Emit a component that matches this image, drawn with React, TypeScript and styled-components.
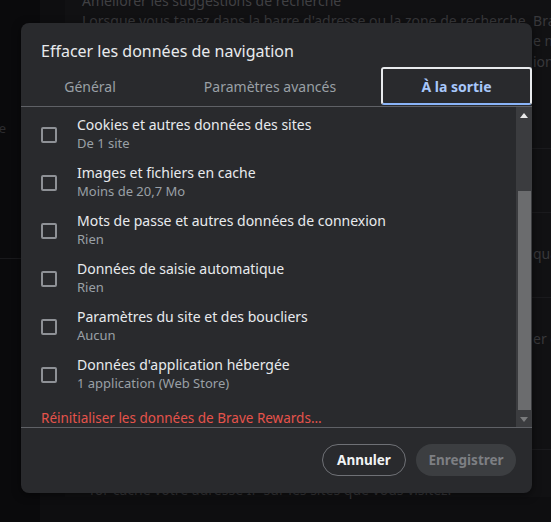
import React from "react";
import styled, { createGlobalStyle } from "styled-components";

const Global = createGlobalStyle`
  html, body { margin: 0; padding: 0; background: #0d0d0f; overflow: hidden; }
  body { width: 551px; height: 522px; font-family: "Noto Sans", "DejaVu Sans", sans-serif; }
  * { box-sizing: border-box; }
`;

const Page = styled.div`
  position: relative;
  width: 551px;
  height: 522px;
  display: flex;
  overflow: hidden;
  background: #0e0e10;
`;

const Sidebar = styled.div`
  width: 40px;
  flex: none;
  background: #0a0a0c;
  padding-top: 119px;
  overflow: hidden;
`;

const SideText = styled.div`
  width: 6px;
  overflow: hidden;
  direction: rtl;
  white-space: nowrap;
  color: #2c2c2f;
  font-size: 13px;
  line-height: 18px;
`;

const SideLine = styled.div`
  height: 1px;
  background: #19191c;
  margin-top: 121px;
`;

const Main = styled.div`
  flex: 1;
  padding-left: 25px;
  overflow: hidden;
`;

const Card = styled.div`
  background: #111113;
  height: 505px;
  width: 600px;
  padding: 0 0 0 17px;
  margin-top: -8px;
  color: #38383b;
  font-size: 14px;
  white-space: nowrap;
`;

const BgTitle = styled.div`
  color: #404043;
  line-height: 18px;
`;

const BgPara = styled.div`
  line-height: 20px;
  margin-top: 1px;
`;

const BgLine = styled.div<{ $gap: number }>`
  height: 1px;
  background: #1a1a1d;
  margin-top: ${(p) => p.$gap}px;
`;

const BgRow = styled.div<{ $gap: number }>`
  padding-left: 451px;
  margin-top: ${(p) => p.$gap}px;
  line-height: 20px;
`;

const BgBottom = styled.div`
  padding-left: 6px;
  margin-top: 31px;
  line-height: 18px;
`;

const Dialog = styled.div`
  position: absolute;
  left: 21px;
  top: 23px;
  width: 511px;
  height: 470px;
  background: #292a2d;
  border-radius: 8px;
  box-shadow: 0 2px 8px rgba(0, 0, 0, 0.5);
  display: flex;
  flex-direction: column;
  overflow: hidden;
`;

const Title = styled.h2`
  margin: 0;
  padding: 17px 20px 0;
  font-size: 16px;
  font-weight: 400;
  color: #e8eaed;
  line-height: 22px;
`;

const Tabs = styled.div`
  display: grid;
  grid-template-columns: 138px 222px 1fr;
  margin-top: 5px;
  height: 40px;
  border-bottom: 1px solid #5f6166;
`;

const Tab = styled.div<{ $active?: boolean }>`
  display: flex;
  align-items: center;
  justify-content: center;
  height: 38px;
  font-size: 14px;
  color: ${(p) => (p.$active ? "#a8c7fa" : "#9aa0a6")};
  font-weight: ${(p) => (p.$active ? 700 : 400)};
  border: ${(p) => (p.$active ? "2px solid #e8eaed" : "none")};
  border-bottom: ${(p) => (p.$active ? "2px solid #8ab4f8" : "none")};
  border-radius: ${(p) => (p.$active ? "3px" : "0")};
`;

const Body = styled.div`
  display: flex;
  height: 321px;
  border-bottom: 1px solid #5f6166;
`;

const List = styled.div`
  flex: 1;
  padding: 3px 0 0 20px;
`;

const Item = styled.div`
  display: flex;
  align-items: center;
  height: 48px;
`;

const Box = styled.span`
  width: 16px;
  height: 16px;
  border: 2px solid #8e9196;
  border-radius: 2px;
  flex: none;
  margin-right: 20px;
  margin-top: 1px;
`;

const Texts = styled.div`
  display: flex;
  flex-direction: column;
`;

const ItemTitle = styled.div`
  font-size: 14px;
  color: #e8eaed;
  line-height: 19px;
`;

const ItemSub = styled.div`
  font-size: 13px;
  color: #9aa0a6;
  line-height: 19px;
`;

const Link = styled.div`
  margin-top: 11px;
  font-size: 13.5px;
  color: #e5534b;
  line-height: 18px;
`;

const Scrollbar = styled.div`
  width: 16px;
  flex: none;
  background: #3b3c3f;
  display: flex;
  flex-direction: column;
  align-items: center;
`;

const Arrow = styled.div`
  height: 16px;
  width: 16px;
  display: flex;
  align-items: center;
  justify-content: center;
  flex: none;
`;

const Gap = styled.div<{ $h: number }>`
  height: ${(p) => p.$h}px;
  flex: none;
`;

const Thumb = styled.div`
  width: 13px;
  flex: 1;
  background: #6b6c6e;
`;

const Footer = styled.div`
  display: flex;
  justify-content: flex-end;
  gap: 10px;
  padding: 16px 16px 0;
`;

const Button = styled.button<{ $primary?: boolean }>`
  height: 32px;
  border-radius: 16px;
  font-family: inherit;
  font-size: 13.5px;
  font-weight: 700;
  padding: 0;
  width: ${(p) => (p.$primary ? "100px" : "84px")};
  color: ${(p) => (p.$primary ? "#7d7f83" : "#f1f3f4")};
  background: ${(p) => (p.$primary ? "#3c3e41" : "transparent")};
  border: ${(p) => (p.$primary ? "none" : "1px solid #6f7176")};
`;

const items = [
  ["Cookies et autres données des sites", "De 1 site"],
  ["Images et fichiers en cache", "Moins de 20,7 Mo"],
  ["Mots de passe et autres données de connexion", "Rien"],
  ["Données de saisie automatique", "Rien"],
  ["Paramètres du site et des boucliers", "Aucun"],
  ["Données d'application hébergée", "1 application (Web Store)"],
];

export default function App() {
  return (
    <>
      <Global />
      <Page>
        <Sidebar>
          <SideText>Confidentialité et sécurité e</SideText>
          <SideLine />
        </Sidebar>
        <Main>
          <Card>
            <BgTitle>Améliorer les suggestions de recherche</BgTitle>
            <BgPara>Lorsque vous tapez dans la barre d'adresse ou la zone de recherche, Brave</BgPara>
            <BgRow $gap={0}>e navigateur envoie ce que vous saisissez</BgRow>
            <BgRow $gap={1}>ion de meilleures suggestions</BgRow>
            <BgLine $gap={76} />
            <BgLine $gap={63} />
            <BgRow $gap={31}>quand vous quittez</BgRow>
            <BgLine $gap={33} />
            <BgRow $gap={31}>er et supprimer</BgRow>
            <BgLine $gap={100} />
            <BgBottom>Tor cache votre adresse IP sur les sites que vous visitez.</BgBottom>
          </Card>
        </Main>
        <Dialog>
          <Title>Effacer les données de navigation</Title>
          <Tabs>
            <Tab>Général</Tab>
            <Tab>Paramètres avancés</Tab>
            <Tab $active>À la sortie</Tab>
          </Tabs>
          <Body>
            <List>
              {items.map(([t, s]) => (
                <Item key={t}>
                  <Box />
                  <Texts>
                    <ItemTitle>{t}</ItemTitle>
                    <ItemSub>{s}</ItemSub>
                  </Texts>
                </Item>
              ))}
              <Link>Réinitialiser les données de Brave Rewards...</Link>
            </List>
            <Scrollbar>
              <Arrow>
                <svg width="8" height="5" viewBox="0 0 8 5">
                  <path d="M0 5 L4 0 L8 5 Z" fill="#e8e8e8" />
                </svg>
              </Arrow>
              <Gap $h={68} />
              <Thumb />
              <Gap $h={1} />
              <Arrow>
                <svg width="8" height="5" viewBox="0 0 8 5">
                  <path d="M0 0 L8 0 L4 5 Z" fill="#7a7b7d" />
                </svg>
              </Arrow>
            </Scrollbar>
          </Body>
          <Footer>
            <Button>Annuler</Button>
            <Button $primary>Enregistrer</Button>
          </Footer>
        </Dialog>
      </Page>
    </>
  );
}
